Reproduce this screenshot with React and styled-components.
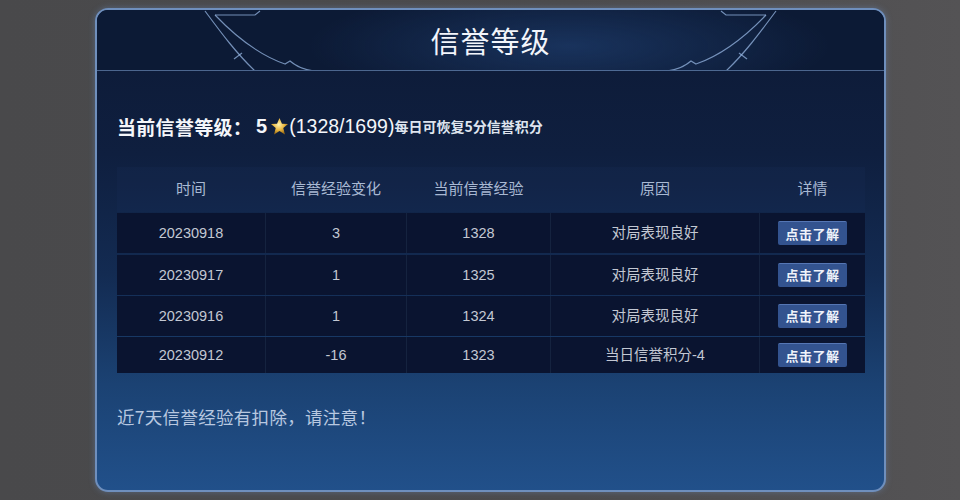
import React from "react"
import styled, { createGlobalStyle } from "styled-components"

const GlobalStyle = createGlobalStyle`
  html, body {
    margin: 0;
    padding: 0;
    background: #4a4a4c;
  }
  body {
    font-family: "Liberation Sans", "Noto Sans CJK SC", sans-serif;
  }
`

const Page = styled.div`
  width: 960px;
  height: 500px;
  box-sizing: border-box;
  padding: 8px 74px 8px 95px;
  background: linear-gradient(90deg, #49494b 0%, #4c4b4d 60%, #545355 100%);
`

const Panel = styled.div`
  width: 791px;
  height: 484px;
  box-sizing: border-box;
  border: 2px solid #6f8fbd;
  border-radius: 13px;
  overflow: hidden;
  display: flex;
  flex-direction: column;
  background: linear-gradient(
    180deg,
    #0d1a36 0%,
    #0f1f3f 30%,
    #132b52 55%,
    #1b4273 78%,
    #21508a 100%
  );
  box-shadow: 0 0 6px rgba(120, 160, 220, 0.35);
`

const Header = styled.div`
  position: relative;
  height: 60px;
  flex-shrink: 0;
  display: flex;
  align-items: center;
  justify-content: center;
  border-bottom: 1px solid rgba(130, 165, 215, 0.55);
  background: radial-gradient(
    ellipse 260px 60px at 60% 60%,
    rgba(40, 80, 140, 0.45),
    rgba(13, 26, 54, 0) 100%
  ),
  #0c1a35;
`

const Title = styled.h1`
  margin: 0;
  position: relative;
  font-family: "Noto Sans CJK SC", sans-serif;
  font-size: 29px;
  line-height: 36px;
  font-weight: 400;
  letter-spacing: 1px;
  color: #f2f5fb;
`

const Decor = styled.svg`
  position: absolute;
  inset: 0;
  pointer-events: none;
`

const Body = styled.div`
  flex: 1;
  display: flex;
  flex-direction: column;
  padding: 43px 20px 0 20px;
`

const LevelLine = styled.div`
  display: flex;
  align-items: center;
  height: 24px;
  color: #f4f6fa;
`

const LevelLabel = styled.span`
  font-family: "Noto Sans CJK SC", sans-serif;
  font-size: 19px;
  font-weight: 700;
  letter-spacing: 0.3px;
`

const LevelValue = styled.span`
  font-size: 20px;
  font-weight: 700;
  margin-left: 4px;
  margin-right: 3px;
`

const Progress = styled.span`
  font-size: 19.5px;
`

const Hint = styled.span`
  font-family: "Noto Sans CJK SC", sans-serif;
  font-size: 14px;
  font-weight: 700;
  color: #dfe5ef;
`

const Table = styled.div`
  margin-top: 29px;
  width: 748px;
  display: flex;
  flex-direction: column;
  gap: 1.3px;
`

const cols = "148px 140px 143px 208px 105px"

const HeadRow = styled.div`
  display: grid;
  grid-template-columns: ${cols};
  column-gap: 1px;
  height: 45px;
  background: rgba(30, 60, 110, 0.12);
`

const HeadCell = styled.div`
  display: flex;
  align-items: center;
  justify-content: center;
  padding-bottom: 4px;
  font-family: "Noto Sans CJK SC", sans-serif;
  font-size: 15px;
  line-height: 20px;
  color: #a9b9d3;
`

const Row = styled.div`
  display: grid;
  grid-template-columns: ${cols};
  gap: 1px;
  height: ${(p) => (p.$short ? 36 : 40)}px;
  background: #15233f;
`

const Cell = styled.div`
  display: flex;
  align-items: center;
  justify-content: center;
  background: #0a1430;
  font-family: "Liberation Sans", "Noto Sans CJK SC", sans-serif;
  font-size: 14.5px;
  line-height: 20px;
  color: #c3c8d3;

  & > span {
    display: block;
    height: 20px;
    line-height: 20px;
  }
`

const DetailButton = styled.button`
  width: 69px;
  height: 24px;
  padding: 0;
  border: none;
  border-top: 1px solid #5576b4;
  border-radius: 2px;
  background: #33538f;
  color: #eef2fa;
  font-family: "Noto Sans CJK SC", sans-serif;
  font-size: 13px;
  line-height: 22px;
  font-weight: 700;
  letter-spacing: 0.5px;
  cursor: pointer;
`

const Notice = styled.p`
  margin: 32px 0 0 0;
  line-height: 24px;
  font-family: "Noto Sans CJK SC", sans-serif;
  font-size: 17.5px;
  color: #b8c8e0;
  letter-spacing: 0.3px;
`

const records = [
  { date: "20230918", delta: "3", total: "1328", reason: "对局表现良好" },
  { date: "20230917", delta: "1", total: "1325", reason: "对局表现良好" },
  { date: "20230916", delta: "1", total: "1324", reason: "对局表现良好" },
  { date: "20230912", delta: "-16", total: "1323", reason: "当日信誉积分-4" },
]

// header ornaments, the right half is the left half mirrored
const Ornament = () => (
  <g fill="none" stroke="rgba(150, 182, 225, 0.75)" strokeWidth="1.2">
    <path d="M 108 1 C 125 24, 140 44, 158 61" />
    <path d="M 137 49 L 145 43" />
    <path d="M 118 5 L 158 5 L 163 1" />
    <path d="M 118 5 C 140 28, 162 45, 188 54 L 193 51 C 200 57, 208 60, 218 61" />
  </g>
)

const HeaderDecor = () => (
  <Decor viewBox="0 0 787 60" preserveAspectRatio="none">
    <Ornament />
    <g transform="translate(787 0) scale(-1 1)">
      <Ornament />
    </g>
  </Decor>
)

const Star = () => (
  <svg width="19" height="19" viewBox="0 0 20 20">
    <defs>
      <radialGradient id="gold" cx="45%" cy="40%" r="60%">
        <stop offset="0%" stopColor="#fff3b0" />
        <stop offset="55%" stopColor="#e8b640" />
        <stop offset="100%" stopColor="#9c6a12" />
      </radialGradient>
    </defs>
    <polygon
      points="10,1 12.6,7 19,7.4 14,11.6 15.7,18.5 10,14.8 4.3,18.5 6,11.6 1,7.4 7.4,7"
      fill="url(#gold)"
    />
  </svg>
)

export default function App() {
  return (
    <Page>
      <GlobalStyle />
      <Panel>
        <Header>
          <HeaderDecor />
          <Title>信誉等级</Title>
        </Header>
        <Body>
          <LevelLine>
            <LevelLabel>当前信誉等级：</LevelLabel>
            <LevelValue>5</LevelValue>
            <Star />
            <Progress>(1328/1699)</Progress>
            <Hint>每日可恢复5分信誉积分</Hint>
          </LevelLine>
          <Table>
            <HeadRow>
              <HeadCell>时间</HeadCell>
              <HeadCell>信誉经验变化</HeadCell>
              <HeadCell>当前信誉经验</HeadCell>
              <HeadCell>原因</HeadCell>
              <HeadCell>详情</HeadCell>
            </HeadRow>
            {records.map((r, i) => (
              <Row key={r.date} $short={i === records.length - 1}>
                <Cell><span>{r.date}</span></Cell>
                <Cell><span>{r.delta}</span></Cell>
                <Cell><span>{r.total}</span></Cell>
                <Cell><span>{r.reason}</span></Cell>
                <Cell>
                  <DetailButton>点击了解</DetailButton>
                </Cell>
              </Row>
            ))}
          </Table>
          <Notice>近7天信誉经验有扣除，请注意！</Notice>
        </Body>
      </Panel>
    </Page>
  )
}
